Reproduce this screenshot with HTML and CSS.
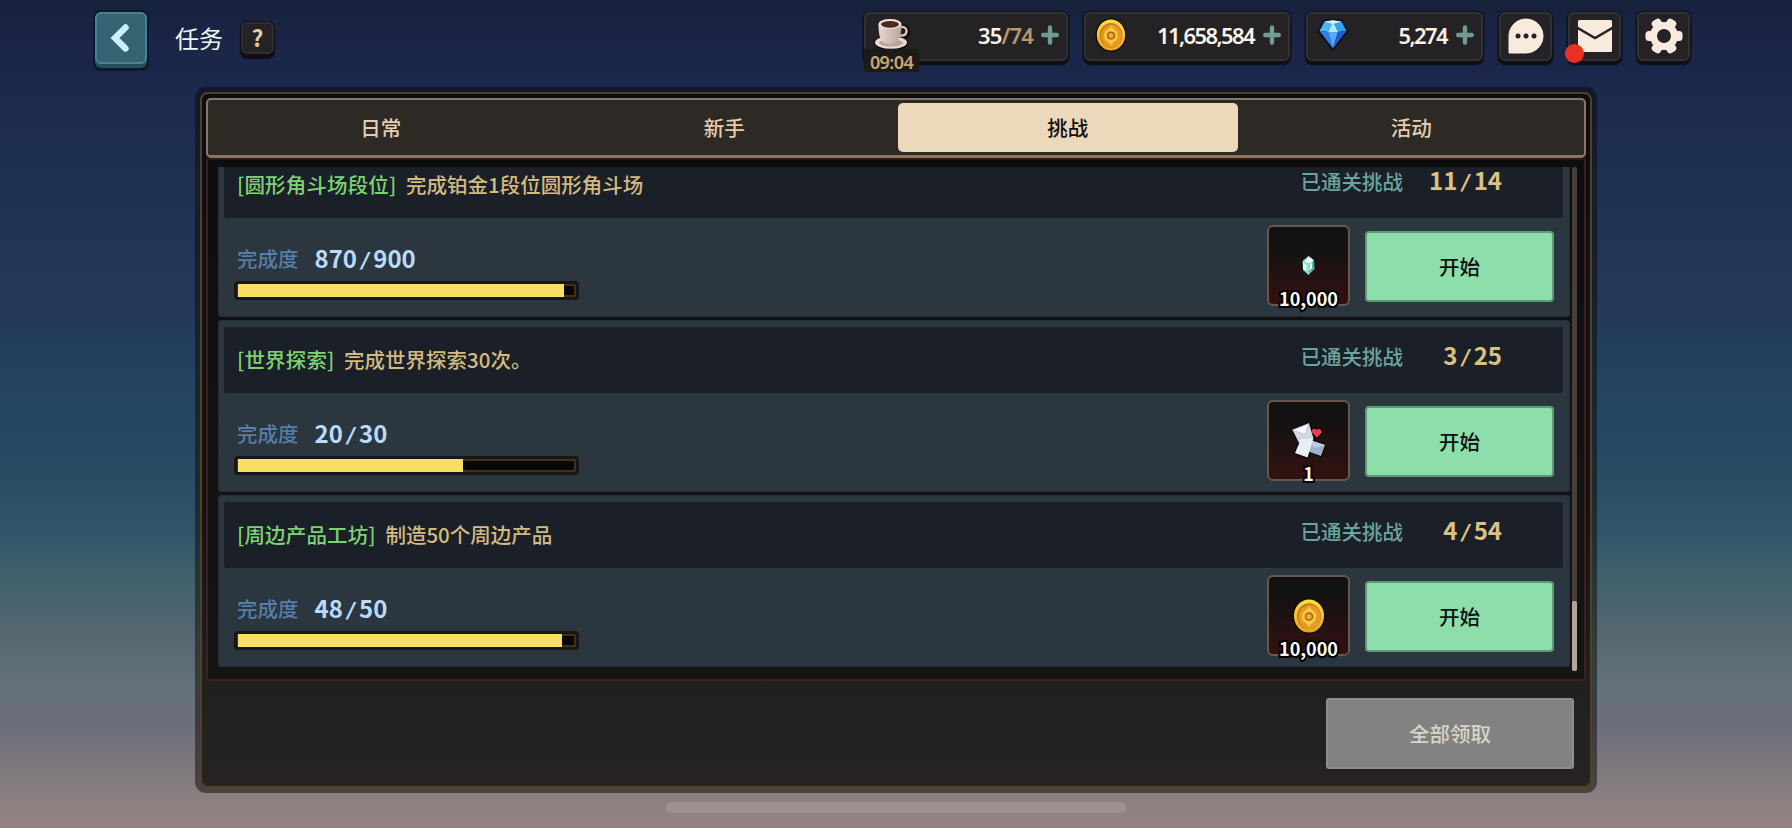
FILE: index.html
```
<!DOCTYPE html>
<html lang="zh-CN">
<head>
    <meta charset="UTF-8">
    <meta name="viewport" content="width=device-width, initial-scale=1.0">
    <title>任务</title>
    <link rel="stylesheet" href="styles.css">
</head>
<body>
    <svg class="defs" width="0" height="0">
        <linearGradient id="coinEdge" x1="0" y1="0" x2="0" y2="1">
            <stop offset="0" stop-color="#ffe23c"/>
            <stop offset="1" stop-color="#f0a020"/>
        </linearGradient>
        <linearGradient id="cup" x1="0" y1="0" x2="1" y2="0">
            <stop offset="0" stop-color="#e6d8d0"/>
            <stop offset="1" stop-color="#b8a59e"/>
        </linearGradient>
        <symbol id="coin" viewBox="0 0 32 34">
            <ellipse cx="16" cy="17" rx="15.5" ry="16.8" fill="#0b0a08"/>
            <ellipse cx="16" cy="17" rx="14.2" ry="15.6" fill="url(#coinEdge)"/>
            <ellipse cx="16" cy="17.3" rx="11.4" ry="12.4" fill="#c97c1e"/>
            <ellipse cx="16.5" cy="18" rx="10.4" ry="11.3" fill="#e59a28"/>
            <path d="M16 7.500l2.500 3.500a7 7 0 0 1 0 13L16 27.500 13.500 24a7 7 0 0 1 0-13z" fill="#f9c93c"/>
            <circle cx="16" cy="17.5" r="3.3" fill="#f2ae30" stroke="#a8641a" stroke-width="1.6"/>
        </symbol>
        <symbol id="plus" viewBox="0 0 18 20">
            <path d="M9 2.500v15M2.200 10h13.600" stroke="#6f9c92" stroke-width="4.400" stroke-linecap="round"/>
        </symbol>
    </svg>

    <header class="topbar">
        <button class="back">
            <svg width="24" height="32" viewBox="0 0 24 32"><path d="M16.500 5.500L6 16l10.500 10.500" fill="none" stroke="#c9f1fb" stroke-width="6.400" stroke-linecap="round"/></svg>
        </button>
        <h1 class="title">任务</h1>
        <button class="help">?</button>

        <div class="wallet">
            <div class="res res-energy">
                <svg class="res-icon" width="36" height="34" viewBox="0 0 36 34">
                    <path d="M24 9h4.500a5 5 0 0 1-.5 10h-4" fill="none" stroke="#0c0a0b" stroke-width="5.500"/>
                    <ellipse cx="17" cy="25" rx="17" ry="7.500" fill="#0c0a0b"/>
                    <ellipse cx="17" cy="24.500" rx="16" ry="6.300" fill="#e9dbd4"/>
                    <ellipse cx="17" cy="25" rx="12" ry="3.500" fill="#b9a49c"/>
                    <path d="M25 9h3.500a4 4 0 0 1-.5 8.500h-4" fill="none" stroke="#d3c2ba" stroke-width="2.600"/>
                    <path d="M4.500 6c0 9 1 15 5 18.500 3 1.800 9 1.800 12 0C26 21 27.500 15 27.500 6z" fill="url(#cup)"/>
                    <ellipse cx="16" cy="6" rx="11.500" ry="5" fill="#efe2dc"/>
                    <ellipse cx="16" cy="6.300" rx="9" ry="3.400" fill="#4b2a20"/>
                </svg>
                <span class="res-num">35<em>/74</em></span>
                <svg class="plus" width="18" height="20"><use href="#plus"/></svg>
                <span class="timer">09:04</span>
            </div>
            <div class="res res-gold">
                <svg class="res-icon" width="32" height="34"><use href="#coin"/></svg>
                <span class="res-num tight">11,658,584</span>
                <svg class="plus" width="18" height="20"><use href="#plus"/></svg>
            </div>
            <div class="res res-gem">
                <svg class="res-icon" width="32" height="32" viewBox="0 0 32 32">
                    <path d="M7 1.500Q16-.5 25 1.500L31 12 16 31 1 12z" fill="#0a1020" stroke="#0a1020" stroke-width="1.500" stroke-linejoin="round"/>
                    <path d="M7.500 2.500L16 1.500 11 13 2.500 12z" fill="#4fb4f5"/>
                    <path d="M16 1.500l8.500 1 5 9.500L21 13z" fill="#3a9cf0"/>
                    <path d="M16 2L11 13h10z" fill="#a9ecff"/>
                    <path d="M7.500 2.500L16 1.300l8.500 1.200L16 5z" fill="#d3f5ff"/>
                    <path d="M2.500 12l8.500 1 5 16.500z" fill="#2f82e4"/>
                    <path d="M11 13h10l-5 16.500z" fill="#55a8f6"/>
                    <path d="M29.500 12L21 13l-5 16.500z" fill="#1f5fce"/>
                </svg>
                <span class="res-num tight">5,274</span>
                <svg class="plus" width="18" height="20"><use href="#plus"/></svg>
            </div>
            <button class="icon-btn">
                <svg width="36" height="36" viewBox="0 0 36 36">
                    <path d="M1 35V18A17 17 0 1 1 18 35z" fill="#f8ebdd" stroke="#f8ebdd" stroke-linejoin="round"/>
                    <circle cx="10" cy="18" r="2.500" fill="#252226"/>
                    <circle cx="18" cy="18" r="2.500" fill="#252226"/>
                    <circle cx="26" cy="18" r="2.500" fill="#252226"/>
                </svg>
            </button>
            <button class="icon-btn">
                <svg width="36" height="34" viewBox="0 0 36 34">
                    <rect x="1" y="1" width="34" height="32" rx="1.500" fill="#f8ebdd"/>
                    <path d="M0 8.500l18 10.500L36 8.500" fill="none" stroke="#252226" stroke-width="2.400"/>
                </svg>
                <i class="dot"></i>
            </button>
            <button class="icon-btn">
                <svg width="38" height="36" viewBox="-19 -18 38 36">
                    <circle r="10.500" fill="none" stroke="#f8ebdd" stroke-width="7"/>
                    <g fill="#f8ebdd">
                        <rect x="-5" y="-18.500" width="10" height="10" rx="3.500" transform="rotate(90)"/>
                        <rect x="-5" y="-18.500" width="10" height="10" rx="3.500" transform="rotate(30)"/>
                        <rect x="-5" y="-18.500" width="10" height="10" rx="3.500" transform="rotate(-30)"/>
                        <rect x="-5" y="-18.500" width="10" height="10" rx="3.500" transform="rotate(150)"/>
                        <rect x="-5" y="-18.500" width="10" height="10" rx="3.500" transform="rotate(210)"/>
                        <rect x="-5" y="-18.500" width="10" height="10" rx="3.500" transform="rotate(270)"/>
                    </g>
                </svg>
            </button>
        </div>
    </header>

    <main class="panel">
        <div class="panel-inner">
            <nav class="tabs">
                <button class="tab">日常</button>
                <button class="tab">新手</button>
                <button class="tab active">挑战</button>
                <button class="tab">活动</button>
            </nav>

            <div class="list-frame">
                <div class="list">
                    <section class="card">
                        <div class="card-head">
                            <p class="quest"><b>[圆形角斗场段位]</b> 完成铂金1段位圆形角斗场</p>
                            <span class="cleared">已通关挑战</span>
                            <span class="count">11<i>/</i>14</span>
                        </div>
                        <div class="card-body">
                            <div class="progress">
                                <p class="progress-text">完成度 <span>870<i>/</i>900</span></p>
                                <div class="bar"><div class="fill" style="width: 96.67%"></div></div>
                            </div>
                            <div class="reward">
                                <svg width="15" height="21" viewBox="0 0 15 21">
                                    <path d="M7.500 .5L13 4.500l1 9L7.500 20.500 1.500 15 1 6z" fill="#8fe3cf" stroke="#0b1a18" stroke-width="1"/>
                                    <path d="M7.500 1.500L12 5 9 8 4 7z" fill="#fff"/>
                                    <path d="M2 7l4 4-1 5-3-2z" fill="#d9fff5"/>
                                    <path d="M12.500 6l.5 7-5 6V10z" fill="#4fae9c"/>
                                    <path d="M9 9l2-1v5l-3 3z" fill="#e8fff9"/>
                                </svg>
                                <span class="reward-num">10,000</span>
                            </div>
                            <button class="start">开始</button>
                        </div>
                    </section>

                    <section class="card">
                        <div class="card-head">
                            <p class="quest"><b>[世界探索]</b> 完成世界探索30次。</p>
                            <span class="cleared">已通关挑战</span>
                            <span class="count">3<i>/</i>25</span>
                        </div>
                        <div class="card-body">
                            <div class="progress">
                                <p class="progress-text">完成度 <span>20<i>/</i>30</span></p>
                                <div class="bar"><div class="fill" style="width: 66.67%"></div></div>
                            </div>
                            <div class="reward">
                                <svg width="36" height="38" viewBox="0 0 36 38">
                                    <g stroke="#0a0808" stroke-width="2.500" stroke-linejoin="round">
                                        <path d="M19 18l15 5-4 11-14-5z"/>
                                        <path d="M1.500 8L18 1.500l4.500 15-6 19L4 31l4-11z"/>
                                        <path d="M26 15.500l-5-5c-1-4 3-5 4.500-2.500 2-2 6-.5 5 3z"/>
                                    </g>
                                    <path d="M19 18l15 5-4 11-14-5z" fill="#9fb0c8"/>
                                    <path d="M19 18l15 5-11 3z" fill="#bccadd"/>
                                    <path d="M1.500 8L18 1.500l4.500 15L8 21z" fill="#cfd8e4"/>
                                    <path d="M1.500 8L18 1.500l-4 11z" fill="#f6f8fb" stroke="#b4bfce" stroke-width=".8"/>
                                    <path d="M10 17l12.500-.5-6 19L4 31z" fill="#e9eef5"/>
                                    <path d="M26 15.500l-5-5c-1-4 3-5 4.500-2.500 2-2 6-.5 5 3z" fill="#ef3a58"/>
                                </svg>
                                <span class="reward-num">1</span>
                            </div>
                            <button class="start">开始</button>
                        </div>
                    </section>

                    <section class="card">
                        <div class="card-head">
                            <p class="quest"><b>[周边产品工坊]</b> 制造50个周边产品</p>
                            <span class="cleared">已通关挑战</span>
                            <span class="count">4<i>/</i>54</span>
                        </div>
                        <div class="card-body">
                            <div class="progress">
                                <p class="progress-text">完成度 <span>48<i>/</i>50</span></p>
                                <div class="bar"><div class="fill" style="width: 96%"></div></div>
                            </div>
                            <div class="reward">
                                <svg width="34" height="36" viewBox="0 0 32 34"><use href="#coin"/></svg>
                                <span class="reward-num">10,000</span>
                            </div>
                            <button class="start">开始</button>
                        </div>
                    </section>
                </div>
                <div class="scrollbar"><div class="thumb"></div></div>
            </div>

            <footer class="actions">
                <button class="claim-all" disabled>全部领取</button>
            </footer>
        </div>
    </main>

    <div class="home-bar"></div>
</body>
</html>
```
FILE: styles.css
```
:root {
    --dark: #252226;
    --tan: #8c7763;
    --card: #2c363f;
    --head: #1b1f27;
    --gold: #dcc184;
}

* {
    box-sizing: border-box;
}

body {
    margin: 0;
    width: 100vw;
    height: 828px;
    overflow: hidden;
    display: flex;
    flex-direction: column;
    align-items: center;
    font-family: "Noto Sans CJK SC", sans-serif;
    font-size: 20.5px;
    background: linear-gradient(180deg, #16213a 0%, #1a2446 4%, #1c2a4e 12%, #20314f 22%, #24395a 38%, #24415c 44%, #2a4c63 58%, #34566a 65%, #3e5f6b 69%, #53676f 76%, #64727a 83%, #6d6f7a 88%, #7f7a7c 93%, #8e8081 97%, #948180 100%);
}

button {
    padding: 0;
    border: 0;
    font: inherit;
    display: flex;
    align-items: center;
    justify-content: center;
}

p, h1 {
    margin: 0;
}

i, em {
    font-style: normal;
}

.defs {
    position: absolute;
}

/* 顶部栏 */
.topbar {
    width: 100%;
    height: 87px;
    flex: none;
    padding: 12px 102px 0 95px;
    display: flex;
    align-items: flex-start;
}

.back {
    width: 52px;
    height: 52px;
    border-radius: 6px;
    border: 2px solid #458494;
    background: #356372;
    box-shadow: 0 4px 0 #24505a, 0 0 0 2px #10182c, 0 5px 0 2px #10182c;
}

.title {
    margin: 8px 0 0 28px;
    font-size: 24px;
    line-height: 36px;
    font-weight: 400;
    color: #ecfaf2;
}

.help {
    width: 33px;
    height: 32px;
    margin: 10px 0 0 18px;
    padding-bottom: 2px;
    border-radius: 6px;
    border: 2px solid #302c30;
    background: var(--dark);
    box-shadow: 0 4px 1px 1px #0f0f14, 0 0 0 1px #10131f;
    color: #e5c9a2;
    font-size: 23px;
    font-weight: 700;
    line-height: 28px;
}

.wallet {
    margin-left: auto;
    display: flex;
    gap: 16px;
}

.res,
.icon-btn {
    position: relative;
    height: 49px;
    border-radius: 6px;
    border: 2px solid #343135;
    background: var(--dark);
    box-shadow: 0 3px 1px 1px #100f14, 0 0 2px 1px #10131f;
}

.icon-btn {
    width: 53px;
    padding-bottom: 2px;
}

.res {
    display: flex;
    align-items: center;
    padding: 0 7px 3px 9px;
}

.res-energy { width: 204px; }
.res-gold { width: 206px; }
.res-gem { width: 177px; }

.res-energy .res-icon {
    margin-left: -1px;
}

.res-num {
    margin-left: auto;
    font-family: "Noto Sans", sans-serif;
    font-size: 22px;
    font-weight: 600;
    letter-spacing: -0.8px;
    color: #fbf3e6;
}

.res-num.tight {
    letter-spacing: -1.6px;
}

.res-num em {
    color: #b8986a;
}

.plus {
    margin-left: 8px;
}

.res-num.tight + .plus {
    margin-left: 9px;
}

.timer {
    position: absolute;
    left: -2px;
    top: 35px;
    width: 55px;
    height: 23px;
    background: #1d1a1a;
    color: #c9a774;
    font-family: "Noto Sans", sans-serif;
    font-size: 18px;
    font-weight: 600;
    line-height: 26px;
    letter-spacing: -0.6px;
    text-align: center;
}

.dot {
    position: absolute;
    left: -5px;
    bottom: -4px;
    width: 19px;
    height: 19px;
    border-radius: 50%;
    background: #e93223;
}

/* 任务面板 */
.panel {
    width: 1402px;
    height: 706px;
    flex: none;
    padding: 5px;
    border-radius: 11px;
    background: rgba(8, 8, 12, 0.5);
}

.panel-inner {
    height: 696px;
    border: 2px solid #55401f;
    border-radius: 8px;
    padding: 4px;
    background: linear-gradient(180deg, #0c0d14 0%, #121414 60%, #1f2020 84%, #262322 100%);
}

.tabs {
    height: 60px;
    padding: 3px 1px;
    display: flex;
    border: 2px solid var(--tan);
    border-bottom-width: 3px;
    border-radius: 5px;
    background: #2d2924;
}

.tab {
    flex: 1;
    margin: 0 2px;
    padding-bottom: 1px;
    border-radius: 5px;
    background: none;
    color: #e6ccb0;
    font-weight: 500;
}

.tab.active {
    background: #ecd8ba;
    color: #12100e;
}

.list-frame {
    height: 523px;
    padding: 7px 7px 8px 10px;
    display: flex;
    border: 2px solid #40201c;
    border-top-color: #2c1917;
    border-radius: 0 0 3px 3px;
    background: linear-gradient(180deg, #0d0d10, #151514);
}

.list {
    width: 1352px;
    height: 504px;
    overflow: hidden;
    display: flex;
    flex-direction: column;
    justify-content: flex-end;
    gap: 3px;
    padding-bottom: 4px;
}

.card {
    height: 172px;
    flex: none;
    padding: 6px 6px 0 5px;
    border: 1px solid #25303a;
    border-radius: 3px;
    background: var(--card);
}

.card-head {
    height: 66px;
    padding: 0 61px 0 13px;
    display: flex;
    align-items: center;
    border-radius: 2px;
    background: var(--head);
}

.quest {
    margin-top: -3px;
    color: #d3ba80;
    font-weight: 500;
}

.quest b {
    margin-right: 5px;
    font-weight: 500;
    letter-spacing: 0.15px;
    color: #7dd373;
}

.cleared {
    margin: -8px 0 0 auto;
    line-height: 20px;
    font-weight: 500;
    color: #6ba49f;
}

.count {
    width: 99px;
    margin-top: -8px;
    text-align: right;
    font-size: 24px;
    line-height: 22px;
    font-weight: 700;
    color: var(--gold);
}

.count i,
.progress-text i {
    margin: 0 1.5px;
    font-family: "DejaVu Sans Mono", monospace;
    font-size: 22px;
    line-height: 1;
}

.card-body {
    display: flex;
    padding-right: 9px;
}

.progress {
    padding: 23px 0 0 10px;
}

.progress-text {
    display: flex;
    align-items: center;
    gap: 16px;
    height: 34px;
    margin-left: 3px;
    font-weight: 500;
    color: #557fa8;
}

.progress-text span {
    margin-top: -1px;
    font-size: 24px;
    line-height: 30px;
    font-weight: 700;
    color: #b9dcfd;
}

.bar {
    width: 345px;
    height: 19px;
    margin-top: 6px;
    padding: 1px;
    border: 3px solid #16171a;
    border-radius: 4px;
    background: #08090a;
    box-shadow: inset 0 0 0 2px #44310f;
}

.fill {
    height: 13px;
    margin-top: -1px;
    background: #f8de62;
}

.reward {
    position: relative;
    width: 83px;
    height: 81px;
    margin: 7px 0 0 auto;
    display: flex;
    align-items: center;
    justify-content: center;
    border: 2px solid #69574d;
    border-radius: 6px;
    background: linear-gradient(180deg, #121212 20%, #331110 100%);
}

.reward-num {
    position: absolute;
    left: 0;
    right: 0;
    bottom: -6px;
    text-align: center;
    font-size: 18px;
    line-height: 24px;
    font-weight: 700;
    color: #fffdf2;
    -webkit-text-stroke: 4px #000;
    paint-order: stroke fill;
}

.start {
    width: 189px;
    height: 71px;
    margin: 13px 0 0 15px;
    padding-bottom: 1px;
    border: 2px solid #5d9b74;
    border-radius: 4px;
    background: #8edeab;
    color: #0c120e;
    font-weight: 500;
}

.scrollbar {
    width: 5px;
    height: 504px;
    margin-left: 2px;
    display: flex;
    align-items: flex-end;
    background: #474039;
    border-radius: 2px;
}

.thumb {
    width: 5px;
    height: 70px;
    border-radius: 2px;
    background: #b5a698;
}

.actions {
    display: flex;
    justify-content: flex-end;
    padding: 17px 12px 0 0;
}

.claim-all {
    width: 248px;
    height: 71px;
    padding-bottom: 1px;
    border: 2px solid #8d8d8d;
    border-radius: 3px;
    background: #828282;
    color: #d9d4c6;
    font-weight: 500;
}

.home-bar {
    width: 460px;
    height: 11px;
    margin-top: 9px;
    flex: none;
    border-radius: 6px;
    background: #9e9090;
}
```
